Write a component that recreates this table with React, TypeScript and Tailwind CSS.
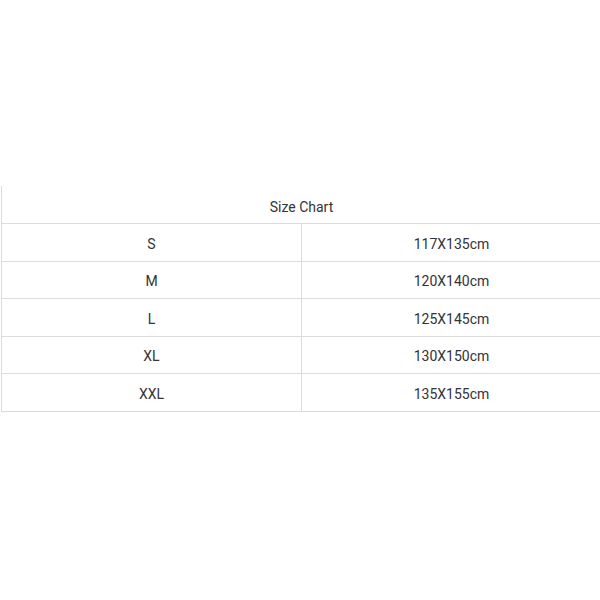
import React from "react";

const rows: [string, string][] = [
  ["S", "117X135cm"],
  ["M", "120X140cm"],
  ["L", "125X145cm"],
  ["XL", "130X150cm"],
  ["XXL", "135X155cm"],
];

export default function App() {
  return (
    <div
      className="w-[600px] h-[600px] bg-white overflow-hidden pt-[186px] pl-[1px]"
      style={{ fontFamily: "Roboto, 'Liberation Sans', sans-serif" }}
    >
      <div className="w-[600px] border-l border-[#dcdcdc] text-[14px] text-[#333333]">
        <div className="h-[38px] pt-[6px] flex items-center justify-center border-b border-[#dcdcdc]">
          Size Chart
        </div>
        {rows.map(([s, v]) => (
          <div key={s} className="flex h-[37.5px] border-b border-[#dcdcdc]">
            <div className="w-[300px] pt-[4px] flex items-center justify-center border-r border-[#dcdcdc]">
              {s}
            </div>
            <div className="flex-1 pt-[4px] flex items-center justify-center">{v}</div>
          </div>
        ))}
      </div>
    </div>
  );
}
